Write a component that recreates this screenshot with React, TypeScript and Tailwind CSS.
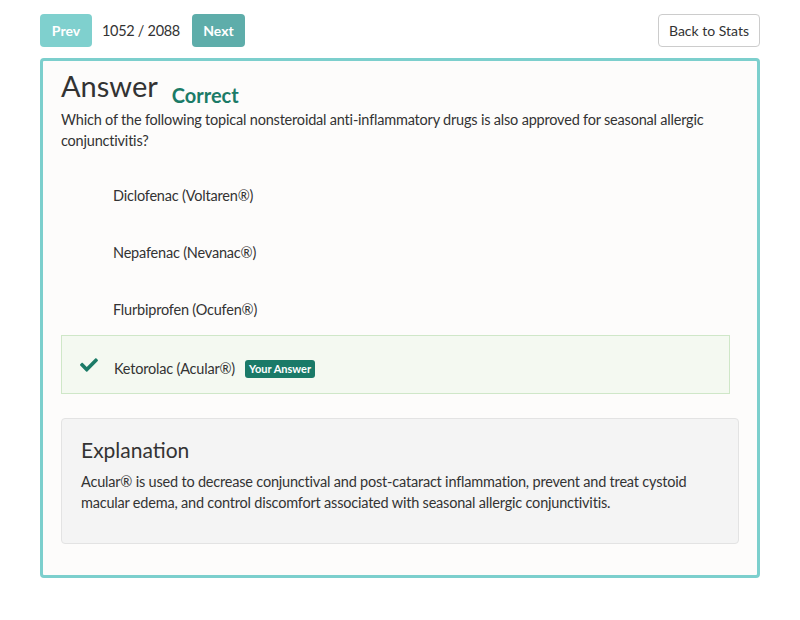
import { FaCheck } from "react-icons/fa";

const options = [
  "Diclofenac (Voltaren®)",
  "Nepafenac (Nevanac®)",
  "Flurbiprofen (Ocufen®)",
];

export default function App() {
  return (
    <div className="min-h-[620px] bg-white px-10 pt-[14px] text-[#333] [font-family:Lato,'Open_Sans',sans-serif]">
      <div className="flex items-center justify-between">
        <div className="flex items-center">
          <button className="h-[33px] w-[52px] rounded bg-[#7fd0ce] text-[14px] font-bold text-white">Prev</button>
          <span className="ml-[10px] mr-[12px] text-[14.5px] tracking-[-0.3px] text-[#333]">1052 / 2088</span>
          <button className="h-[33px] w-[53px] rounded bg-[#5eadaa] text-[14px] font-bold text-white">Next</button>
        </div>
        <button className="h-[33px] rounded border border-[#ccc] bg-white px-[10px] text-[14px] text-[#333]">Back to Stats</button>
      </div>

      <div className="mt-[11px] rounded border-[3px] border-[#7ccfcd] bg-[#fdfcfb] px-[18px] pb-[31px] pt-[8px]">
        <div className="flex items-end gap-[14px]">
          <h1 className="text-[29px] leading-[34px] text-[#333]">Answer</h1>
          <span className="mb-[-7px] text-[20px] font-bold text-[#1b7b67]">Correct</span>
        </div>
        <p className="mt-[6px] text-[14.5px] leading-[21px] tracking-[-0.2px]">
          Which of the following topical nonsteroidal anti-inflammatory drugs is also approved for seasonal allergic conjunctivitis?
        </p>

        <div className="mr-[9px] mt-[16px]">
          {options.map((o) => (
            <div key={o} className="flex h-[57px] items-center pl-[52px] text-[14.5px] tracking-[-0.2px]">
              {o}
            </div>
          ))}
          <div className="-mt-[3px] flex h-[59px] items-center border border-[#cfe7c8] bg-[#f4f9f1] pl-4 text-[14.5px] tracking-[-0.2px]">
            <FaCheck className="h-[18px] w-[22px] text-[#1b7b67]" />
            <div className="mt-[8px] flex items-center">
              <span className="ml-[14px]">Ketorolac (Acular®)</span>
              <span className="ml-[10px] rounded-[3px] bg-[#1a7a68] px-[4px] py-[2px] text-[11px] font-bold leading-[14px] tracking-normal text-white">Your Answer</span>
            </div>
          </div>
        </div>

        <div className="mt-[24px] rounded border border-[#e3e3e3] bg-[#f4f4f4] px-[19px] pb-[30px] pt-[17px]">
          <h2 className="text-[21px] leading-[28px] text-[#333]">Explanation</h2>
          <p className="mt-[7px] text-[14.5px] leading-[21px] tracking-[-0.2px]">
            Acular® is used to decrease conjunctival and post-cataract inflammation, prevent and treat cystoid macular edema, and control discomfort associated with seasonal allergic conjunctivitis.
          </p>
        </div>
      </div>
    </div>
  );
}
